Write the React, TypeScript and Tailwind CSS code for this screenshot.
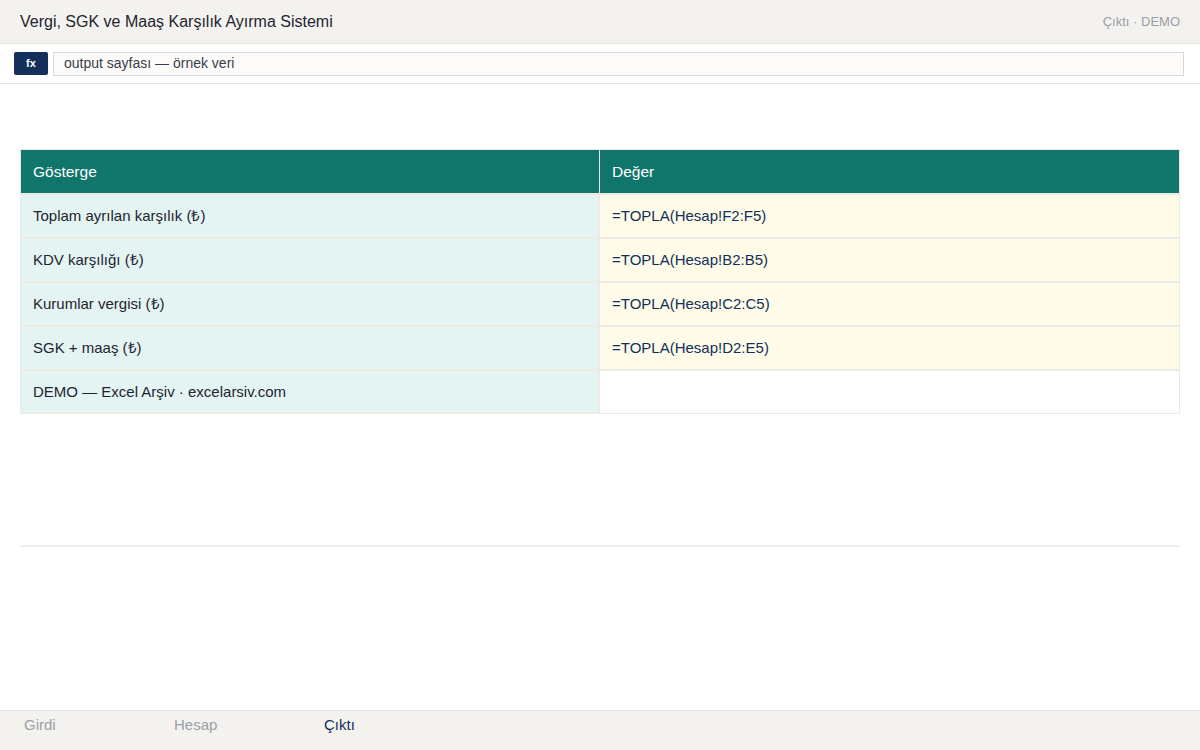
import React from "react";

const rows = [
  ["Toplam ayrılan karşılık (₺)", "=TOPLA(Hesap!F2:F5)"],
  ["KDV karşılığı (₺)", "=TOPLA(Hesap!B2:B5)"],
  ["Kurumlar vergisi (₺)", "=TOPLA(Hesap!C2:C5)"],
  ["SGK + maaş (₺)", "=TOPLA(Hesap!D2:E5)"],
];

export default function App() {
  return (
    <div
      className="w-[1200px] h-[750px] flex flex-col bg-white overflow-hidden"
      style={{ fontFamily: '"Liberation Sans", Arial, sans-serif' }}
    >
      <div className="h-[44px] shrink-0 flex items-center justify-between px-5 bg-[#f3f2ee] border-b border-[#e6e4df]">
        <div className="text-[16px] text-[#1f2430]">Vergi, SGK ve Maaş Karşılık Ayırma Sistemi</div>
        <div className="text-[13px] text-[#9aa0aa]">Çıktı · DEMO</div>
      </div>
      <div className="h-[40px] shrink-0 flex items-center gap-[5px] pl-[14px] pr-[16px] border-b border-[#e6e4df]">
        <div className="w-[34px] h-[23px] rounded-[2px] bg-[#13305a] text-white text-[11px] font-bold flex items-center justify-center">
          fx
        </div>
        <div className="flex-1 h-[24px] border border-[#dcd8d2] bg-[#fcfbf9] flex items-center px-[10px] text-[14px] text-[#3a3f4a]">
          output sayfası — örnek veri
        </div>
      </div>
      <div className="flex-1 px-5 pt-[65px]">
        <div className="w-full border border-[#eceae5]">
          <div className="grid grid-cols-[579px_1fr] h-[43px] bg-[#10766c] text-white text-[15.5px]">
            <div className="flex items-center px-3 border-r border-[#e6e4df]">Gösterge</div>
            <div className="flex items-center px-3">Değer</div>
          </div>
          {rows.map(([a, b]) => (
            <div key={a} className="grid grid-cols-[579px_1fr] h-[44px] border-t-2 border-[#eceae5] text-[15px] text-[#1f2430]">
              <div className="flex items-center px-3 bg-[#e3f4f2] border-r-2 border-[#eceae5]">{a}</div>
              <div className="flex items-center px-3 bg-[#fefbe8] text-[#13305a]">{b}</div>
            </div>
          ))}
          <div className="grid grid-cols-[579px_1fr] h-[44px] border-t-2 border-[#eceae5] text-[15px] text-[#1f2430]">
            <div className="flex items-center px-3 bg-[#e3f4f2] border-r-2 border-[#eceae5]">DEMO — Excel Arşiv · excelarsiv.com</div>
            <div className="bg-white"></div>
          </div>
        </div>
        <div className="mt-[131px] h-[2px] bg-[#efeeea]"></div>
      </div>
      <div className="h-[40px] shrink-0 bg-[#f3f2ee] border-t border-[#e6e4df] flex items-start pt-[3px] text-[15px]">
        <div className="w-[150px] pl-6 text-[#9aa0aa]">Girdi</div>
        <div className="w-[150px] pl-6 text-[#9aa0aa]">Hesap</div>
        <div className="w-[150px] pl-6 text-[#13305a]">Çıktı</div>
      </div>
    </div>
  );
}
